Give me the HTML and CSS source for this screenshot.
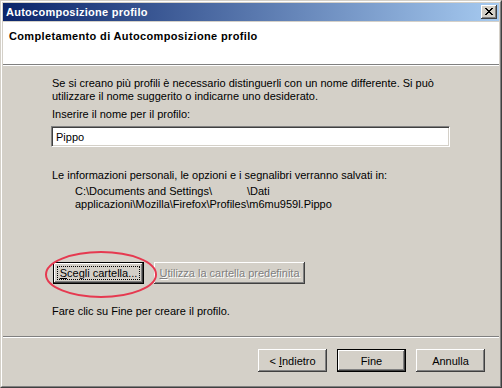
FILE: index.html
```html
<!DOCTYPE html>
<html lang="it">
<head>
    <meta charset="UTF-8">
    <title>Autocomposizione profilo</title>
    <link rel="stylesheet" href="styles.css">
</head>
<body>
    <div class="window">
        <div class="frame">
            <div class="titlebar">
                <span class="title">Autocomposizione profilo</span>
                <button class="close-btn" title="Chiudi">
                    <svg width="8" height="7" viewBox="0 0 8 7" shape-rendering="crispEdges">
                        <path d="M0 0h2v1h-2zM6 0h2v1h-2zM1 1h2v1h-2zM5 1h2v1h-2zM2 2h4v1h-4zM3 3h2v1h-2zM2 4h4v1h-4zM1 5h2v1h-2zM5 5h2v1h-2zM0 6h2v1h-2zM6 6h2v1h-2z" fill="#000"/>
                    </svg>
                </button>
            </div>

            <div class="client">
                <div class="header">
                    <h1>Completamento di Autocomposizione profilo</h1>
                </div>
                <div class="separator"></div>

                <div class="content">
                    <p class="intro">Se si creano più profili è necessario distinguerli con un nome differente. Si può<br>utilizzare il nome suggerito o indicarne uno desiderato.</p>

                    <label class="field-label" for="profileName">Inserire il nome per il profilo:</label>
                    <input type="text" id="profileName" class="textbox" value="Pippo">

                    <p class="info">Le informazioni personali, le opzioni e i segnalibri verranno salvati in:</p>
                    <p class="path">C:\Documents and Settings\<span class="gap"></span>\Dati<br>applicazioni\Mozilla\Firefox\Profiles\m6mu959l.Pippo</p>

                    <div class="folder-buttons">
                        <button class="btn btn-focus"><span class="focus-ring"><u>S</u>cegli cartella...</span></button>
                        <button class="btn btn-wide" disabled><u>U</u>tilizza la cartella predefinita</button>
                        <svg class="highlight" width="114" height="49" viewBox="0 0 114 49">
                            <ellipse cx="57" cy="24.5" rx="55" ry="22.5" fill="none" stroke="#e63950" stroke-width="2"/>
                        </svg>
                    </div>

                    <p class="finish-note">Fare clic su Fine per creare il profilo.</p>
                </div>

                <div class="separator"></div>

                <div class="footer">
                    <button class="btn btn-nav">&lt; <u>I</u>ndietro</button>
                    <button class="btn btn-nav btn-default">Fine</button>
                    <button class="btn btn-nav">Annulla</button>
                </div>
            </div>
        </div>
    </div>
</body>
</html>
```

FILE: styles.css
```css
:root {
    --face: #d4d0c8;
    --shadow: #808080;
    --dark: #404040;
    --light: #ffffff;
}

* {
    margin: 0;
    padding: 0;
    box-sizing: border-box;
}

body {
    width: 502px;
    height: 388px;
    background-color: var(--face);
    font-family: 'Liberation Sans', Arial, sans-serif;
    font-size: 11px;
    color: #000000;
    overflow: hidden;
}

/* classic 3px window frame */
.window {
    width: 502px;
    height: 388px;
    border: 1px solid;
    border-color: var(--face) var(--dark) var(--dark) var(--face);
}

.frame {
    height: 100%;
    border: 1px solid;
    border-color: var(--light) var(--shadow) var(--shadow) var(--light);
    padding: 1px;
    display: flex;
    flex-direction: column;
}

.titlebar {
    height: 18px;
    margin-bottom: 1px;
    padding-left: 3px;
    padding-right: 2px;
    display: flex;
    align-items: center;
    justify-content: space-between;
    background: linear-gradient(to right, #0a246a, #a6caf0);
}

.title {
    color: #ffffff;
    font-weight: 700;
    font-size: 11px;
    letter-spacing: 0.25px;
}

.close-btn {
    width: 16px;
    height: 14px;
    display: flex;
    align-items: center;
    justify-content: center;
    background-color: var(--face);
    border: none;
    box-shadow: inset -1px -1px 0 var(--dark), inset 1px 1px 0 var(--light), inset -2px -2px 0 var(--shadow);
    padding-bottom: 1px;
}

.client {
    flex: 1;
    display: flex;
    flex-direction: column;
}

.header {
    height: 42px;
    background-color: #ffffff;
    padding: 8px 0 0 6px;
}

.header h1 {
    font-size: 11px;
    font-weight: 700;
    line-height: 13px;
    letter-spacing: 0.35px;
}

.separator {
    height: 2px;
    border-top: 1px solid var(--shadow);
    border-bottom: 1px solid var(--light);
}

.content {
    height: 270px;
    padding: 11px 0 0 49px;
    line-height: 13px;
}

.field-label {
    display: block;
    margin-top: 5px;
}

.textbox {
    display: block;
    width: 399px;
    height: 21px;
    margin: 5px 0 0 -1px;
    padding: 0 4px;
    font-family: inherit;
    font-size: 11px;
    border: 1px solid;
    border-color: var(--shadow) var(--light) var(--light) var(--shadow);
    box-shadow: inset 1px 1px 0 var(--dark), inset -1px -1px 0 var(--face);
    background-color: #ffffff;
    outline: none;
}

.info {
    margin-top: 22px;
}

.path {
    margin-top: 3px;
    padding-left: 23px;
}

.path .gap {
    display: inline-block;
    width: 35px;
}

.folder-buttons {
    position: relative;
    display: flex;
    gap: 10px;
    margin: 51px 0 0 1px;
}

.btn {
    height: 22px;
    font-family: inherit;
    font-size: 11px;
    color: #000000;
    background-color: var(--face);
    border: none;
    box-shadow: inset -1px -1px 0 var(--dark), inset 1px 1px 0 var(--light), inset -2px -2px 0 var(--shadow);
}

.btn-focus {
    width: 91px;
    padding: 4px;
    box-shadow: inset 0 0 0 1px #000000, inset -2px -2px 0 var(--dark), inset 2px 2px 0 var(--light), inset -3px -3px 0 var(--shadow);
}

.focus-ring {
    display: flex;
    height: 100%;
    align-items: center;
    justify-content: center;
    border: 1px dotted #000000;
}

.btn-wide {
    width: 151px;
}

.btn:disabled {
    color: var(--shadow);
    text-shadow: 1px 1px 0 var(--light);
}

.highlight {
    position: absolute;
    left: -9px;
    top: -12px;
    pointer-events: none;
}

.finish-note {
    margin-top: 21px;
}

.footer {
    display: flex;
    justify-content: flex-end;
    gap: 10px;
    padding: 11px 14px 0 0;
}

.btn-nav {
    width: 69px;
    height: 23px;
}

.btn-default {
    box-shadow: inset 0 0 0 1px #000000, inset -2px -2px 0 var(--dark), inset 2px 2px 0 var(--light), inset -3px -3px 0 var(--shadow);
}
```
